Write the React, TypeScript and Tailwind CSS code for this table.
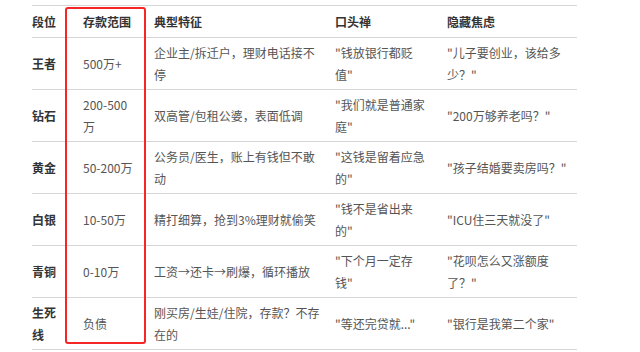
import React from "react";

const rows: [string, string, string, string, string][] = [
  ["王者", "500万+", "企业主/拆迁户，理财电话接不停", "\"钱放银行都贬值\"", "\"儿子要创业，该给多少？\""],
  ["钻石", "200-500万", "双高管/包租公婆，表面低调", "\"我们就是普通家庭\"", "\"200万够养老吗？\""],
  ["黄金", "50-200万", "公务员/医生，账上有钱但不敢动", "\"这钱是留着应急的\"", "\"孩子结婚要卖房吗？\""],
  ["白银", "10-50万", "精打细算，抢到3%理财就偷笑", "\"钱不是省出来的\"", "\"ICU住三天就没了\""],
  ["青铜", "0-10万", "工资→还卡→刷爆，循环播放", "\"下个月一定存钱\"", "\"花呗怎么又涨额度了？\""],
  ["生死线", "负债", "刚买房/生娃/住院，存款？不存在的", "\"等还完贷就...\"", "\"银行是我第二个家\""],
];

const headers = ["段位", "存款范围", "典型特征", "口头禅", "隐藏焦虑"];

const colCls = [
  "w-[51px] pr-[21px]",
  "w-[71px] pr-[17px]",
  "w-[181px] pr-[15px]",
  "w-[112px] pr-[22px]",
  "w-[130px] pr-[10px]",
];

export default function App() {
  return (
    <div
      className="relative w-[640px] h-[352px] bg-white overflow-hidden"
      style={{ fontFamily: '"Noto Sans CJK SC", "Noto Sans", sans-serif' }}
    >
      <div className="pt-[5px] pl-[32px]">
        <div className="w-[545px] border-t border-[#d6d6d6]">
          <div className="flex h-[32px] items-center border-b border-[#d6d6d6]">
            {headers.map((h, i) => (
              <div
                key={i}
                className={`${colCls[i]} shrink-0 text-[12px] leading-[22px] font-bold text-[#333333]`}
              >
                {h}
              </div>
            ))}
          </div>
          {rows.map((r, ri) => (
            <div key={ri} className="flex h-[52px] items-center border-b border-[#d6d6d6]">
              {r.map((c, ci) => (
                <div
                  key={ci}
                  className={`${colCls[ci]} shrink-0 text-[12px] leading-[22px] ${
                    ci === 0 ? "font-bold text-[#333333]" : "text-[#555555]"
                  }`}
                >
                  {c}
                </div>
              ))}
            </div>
          ))}
        </div>
      </div>
      <div className="absolute left-[65px] top-[7px] w-[81px] h-[337px] border-2 border-[#f42626] rounded-[3px] pointer-events-none" />
    </div>
  );
}
